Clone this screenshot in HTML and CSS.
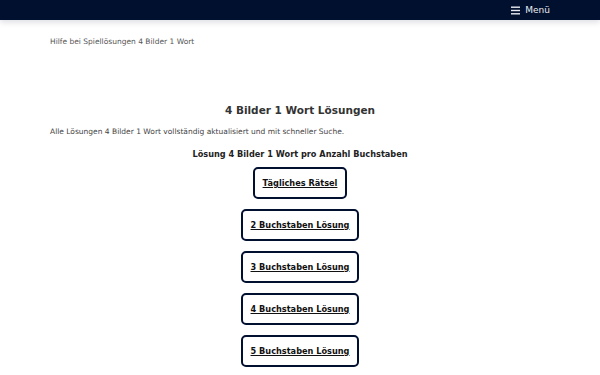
FILE: index.html
```html
<!DOCTYPE html>
<html lang="de">
<head>
<meta charset="utf-8">
<link rel="stylesheet" href="styles.css">
</head>
<body>
<header class="topbar">
  <button class="menu-toggle"><svg class="burger" width="9" height="9" viewBox="0 0 9 9"><rect x="0" y="0.5" width="9" height="1.4" fill="currentColor"/><rect x="0" y="3.8" width="9" height="1.4" fill="currentColor"/><rect x="0" y="7.1" width="9" height="1.4" fill="currentColor"/></svg> Menü</button>
</header>
<main class="content">
  <p class="site-desc">Hilfe bei Spiellösungen 4 Bilder 1 Wort</p>
  <h1 class="title">4 Bilder 1 Wort Lösungen</h1>
  <p class="intro">Alle Lösungen 4 Bilder 1 Wort vollständig aktualisiert und mit schneller Suche.</p>
  <h2 class="subtitle">Lösung 4 Bilder 1 Wort pro Anzahl Buchstaben</h2>
  <nav class="buttons">
    <a class="btn" href="#">Tägliches Rätsel</a>
    <a class="btn" href="#">2 Buchstaben Lösung</a>
    <a class="btn" href="#">3 Buchstaben Lösung</a>
    <a class="btn" href="#">4 Buchstaben Lösung</a>
    <a class="btn" href="#">5 Buchstaben Lösung</a>
  </nav>
</main>
</body>
</html>
```
FILE: styles.css
```css
html, body { margin: 0; padding: 0; }
body {
  font-family: "DejaVu Sans", sans-serif;
  background: #fff;
  color: #222;
  width: 600px;
  height: 375px;
  overflow: hidden;
}
.topbar {
  height: 20px;
  background: #00102e;
  display: flex;
  justify-content: flex-end;
  align-items: center;
  padding-right: 50px;
  box-shadow: 0 2px 6px rgba(0, 16, 46, 0.15);
}
.menu-toggle {
  background: none;
  border: 0;
  color: #e8ebf2;
  font-family: "DejaVu Sans", sans-serif;
  font-size: 9px;
  padding: 0;
  display: flex;
  align-items: center;
  gap: 5px;
}
.burger { display: block; }
.content {
  padding: 0 50px;
}
.site-desc {
  margin: 17px 0 0;
  font-size: 7.5px;
  color: #555;
  line-height: 10px;
}
.title {
  margin: 56px 0 0;
  text-align: center;
  font-size: 10.5px;
  line-height: 14px;
  color: #333;
}
.intro {
  margin: 10px 0 0;
  font-size: 7.5px;
  color: #444;
  line-height: 10px;
}
.subtitle {
  margin: 12px 0 0;
  text-align: center;
  font-size: 8.2px;
  line-height: 11px;
  color: #222;
}
.buttons {
  margin-top: 7px;
  display: flex;
  flex-direction: column;
  align-items: center;
  gap: 10px;
}
.btn {
  display: block;
  border: 2px solid #00102e;
  border-radius: 5px;
  padding: 0 8px;
  height: 28px;
  line-height: 28px;
  font-size: 8.2px;
  font-weight: bold;
  color: #111;
  text-decoration: underline;
  background: #fff;
}
```
